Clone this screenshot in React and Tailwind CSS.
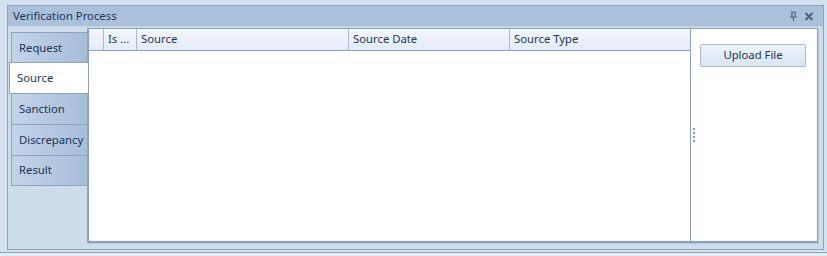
import React from 'react'

const FONT = { fontFamily: '"Noto Sans", "Open Sans", sans-serif' }

const tabs = ['Request', 'Source', 'Sanction', 'Discrepancy', 'Result']
const columns = [
  { label: '', w: 'w-[15px]' },
  { label: 'Is ...', w: 'w-[33px]' },
  { label: 'Source', w: 'w-[212px]' },
  { label: 'Source Date', w: 'w-[161px]' },
  { label: 'Source Type', w: 'flex-1' },
]

function PinIcon() {
  return (
    <svg width="9" height="10" viewBox="0 0 9 10" fill="none">
      <path d="M2 1h5M3 1v5M6 1v5M1 6h7M4.5 6v4" stroke="#4b6183" strokeWidth="1.2" />
    </svg>
  )
}

function CloseIcon() {
  return (
    <svg width="10" height="9" viewBox="0 0 10 9" fill="none">
      <path d="M1.5 1l7 7M8.5 1l-7 7" stroke="#4b6183" strokeWidth="2" />
    </svg>
  )
}

export default function App() {
  return (
    <div className="w-[827px] h-[256px] bg-[#d5e1f0] overflow-hidden text-[11.3px] text-[#1e3557]" style={FONT}>
      {/* Panel */}
      <div className="ml-[7px] mt-[5px] w-[817px] h-[245px] border border-[#8ea2bd] flex flex-col bg-[#cfdcec]">
        <div className="h-[21px] bg-[#abc0d9] border-b border-[#c3d3e6] flex items-center pl-[5px] pr-[9px]">
          <span className="flex-1 leading-none">Verification Process</span>
          <div className="flex items-center gap-[6px]">
            <PinIcon />
            <CloseIcon />
          </div>
        </div>

        <div className="flex-1 flex pt-[1px] pr-[5px] pb-[6px]">
          {/* Tabs */}
          <div className="w-[80px] -mr-[1px] relative z-10 flex flex-col pt-[4px] items-end">
            {tabs.map((t) =>
              t === 'Source' ? (
                <div key={t} className="w-[79px] h-[32px] -my-[1px] bg-white border border-[#8ea3c0] border-r-0 flex items-center pl-[7px] relative z-10">
                  {t}
                </div>
              ) : (
                <div key={t} className="w-[77px] h-[31px] bg-gradient-to-r from-[#c3d4e9] to-[#a8bdd8] border border-[#8ea3c0] border-b-0 last:border-b flex items-center pl-[7px]">
                  {t}
                </div>
              )
            )}
          </div>

          {/* Grid + side panel */}
          <div className="flex-1 flex bg-white border-l-2 border-b-2 border-t border-r border-[#8aa0c0] shadow-[1px_1px_0_#b7c7dc]">
            <div className="flex-1 flex flex-col">
              <div className="h-[22px] flex bg-gradient-to-b from-[#f3f7fc] to-[#e2ebf6] border-b border-[#8ea4c2]">
                {columns.map((c, i) => (
                  <div key={i} className={`${c.w} ${i < columns.length - 1 ? 'border-r border-[#a7b9d2]' : ''} flex items-center pl-[4px] whitespace-nowrap`}>
                    {c.label}
                  </div>
                ))}
              </div>
              <div className="flex-1" />
            </div>
            {/* Splitter */}
            <div className="w-[1px] bg-[#8aa0c0]" />
            <div className="w-[126px] flex relative">
              <div className="absolute left-[2px] top-[99px] flex flex-col gap-[2px]">
                <div className="w-[2px] h-[2px] bg-[#7d95b8]" />
                <div className="w-[2px] h-[2px] bg-[#7d95b8]" />
                <div className="w-[2px] h-[2px] bg-[#7d95b8]" />
                <div className="w-[2px] h-[2px] bg-[#7d95b8]" />
              </div>
              <div className="pl-[9px] pt-[15px]">
                <button className="w-[106px] h-[23px] rounded-[2px] border border-[#a8bcd7] bg-gradient-to-b from-[#eef4fb] to-[#d9e5f3] text-[#1e3557] flex items-center justify-center">
                  Upload File
                </button>
              </div>
            </div>
          </div>
        </div>
      </div>
      <div className="mt-[2px] h-[1px] bg-[#8ea2bd]" />
      <div className="h-[3px] bg-[#e3ebf6]" />
    </div>
  )
}
